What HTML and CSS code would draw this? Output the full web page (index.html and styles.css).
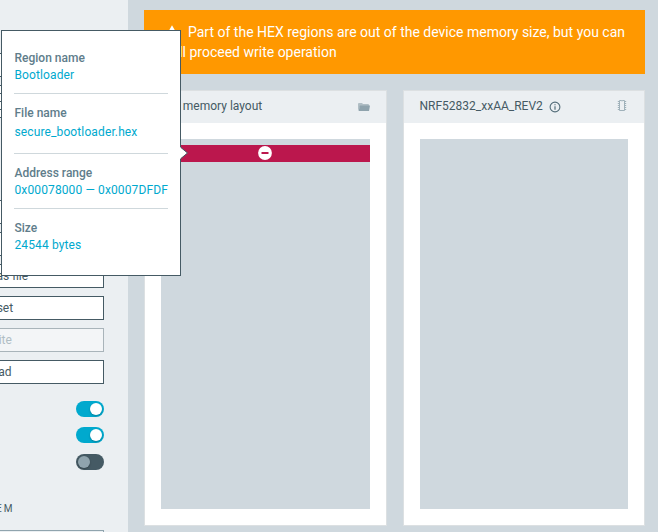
FILE: index.html
```html
<!DOCTYPE html>
<html lang="en">
<head>
<meta charset="utf-8">
<title>Programmer</title>
<link rel="stylesheet" href="styles.css">
</head>
<body>
<div class="app">
  <aside class="sidebar">
    <div class="btn"></div>
    <div class="rows"><i></i><i></i><i></i></div>
    <div class="buttons">
      <button class="btn"></button>
      <button class="btn"></button>
      <button class="btn">Save as file</button>
      <button class="btn">Reset</button>
      <button class="btn disabled">Write</button>
      <button class="btn">Read</button>
    </div>
    <div class="toggles">
      <span class="toggle on"></span>
      <span class="toggle on"></span>
      <span class="toggle last"></span>
    </div>
    <h2 class="group">EM</h2>
    <div class="field"></div>
  </aside>
  <main class="main">
    <div class="alert">
      <svg class="warn" viewBox="0 0 24 24"><path fill="#fff" fill-rule="evenodd" d="M12 2 1 21h22L12 2zm1 16h-2v-2h2v2zm0-4h-2v-4h2v4z"/></svg>Part of the HEX regions are out of the device memory size, but you can still proceed write operation
    </div>
    <div class="cards">
      <section class="card">
        <header class="head"><span>File memory layout</span>
          <svg class="folder" viewBox="0 0 12 10"><path fill="#b0bec5" d="M0 9V2q0-1 1-1h3l1 1h5q1 0 1 1v1H2.5z"/><path fill="#8fa3ad" d="M1.8 3.5H12L11 9H.7z"/></svg>
        </header>
        <div class="memory">
          <div class="region"><svg class="minus" viewBox="0 0 14 14"><circle cx="7" cy="7" r="6.9" fill="#fff"/><path d="M3.5 7h7" stroke="#bb174d" stroke-width="2"/></svg></div>
        </div>
      </section>
      <section class="card">
        <header class="head"><span>NRF52832_xxAA_REV2</span>
          <svg class="info" viewBox="0 0 12 12"><circle cx="6" cy="6" r="4.9" fill="none" stroke="#546e7a" stroke-width="1.1"/><path d="M6 5.2v3.5M6 3.2v1.1" stroke="#546e7a" stroke-width="1.2"/></svg>
          <svg class="chip" viewBox="0 0 10 13"><path d="M2.5 1.5H4q1 .8 2 0h1.5v10h-5z" fill="none" stroke="#9fb1ba"/><path d="M.8 2.5h1.7M.8 4.5h1.7M.8 6.5h1.7M.8 8.5h1.7M.8 10.5h1.7M7.5 2.5h1.7M7.5 4.5h1.7M7.5 6.5h1.7M7.5 8.5h1.7M7.5 10.5h1.7" stroke="#9fb1ba"/></svg>
        </header>
        <div class="memory"></div>
      </section>
    </div>
  </main>
  <div class="popover">
    <dl class="item"><dt>Region name</dt><dd>Bootloader</dd></dl>
    <dl class="item file"><dt>File name</dt><dd>secure_bootloader.hex</dd></dl>
    <dl class="item"><dt>Address range</dt><dd>0x00078000 — 0x0007DFDF</dd></dl>
    <dl class="item"><dt>Size</dt><dd>24544 bytes</dd></dl>
    <svg class="arrow" viewBox="0 0 8 14"><path d="M0 1 7.5 7 0 13z" fill="#fff"/><path d="M1 1.5 7.5 7 1 12.5" fill="none" stroke="#455a64"/></svg>
  </div>
</div>
</body>
</html>
```
FILE: styles.css
```css
* { box-sizing: border-box; }
body { margin: 0; font: 12px/16px Roboto, sans-serif; color: #455a64; }
.app { position: relative; display: flex; width: 658px; height: 532px; overflow: hidden; background: #cfd8de; }
.sidebar { flex: none; width: 240px; margin-left: -112px; padding: 53px 24px 0 0; background: #ebeff2; overflow: hidden; }
.rows { display: flex; flex-direction: column; gap: 7px; height: 33px; margin: 8px 0 82px; padding-top: 7px; border: 1px solid #455a64; background: #fff; }
.rows i { flex: none; height: 1px; background: #455a64; }
.buttons { display: flex; flex-direction: column; gap: 8px; }
.btn { display: block; width: 100%; height: 24px; padding: 0 0 0 4px; border: 1px solid #455a64; background: #fff; color: #455a64; font: 12px/22px Roboto, sans-serif; text-align: center; }
.btn.disabled { border-color: #a9b4ba; background: #f3f5f7; color: #b0bec5; }
.toggles { display: flex; flex-direction: column; align-items: flex-end; gap: 10px; margin-top: 17px; }
.toggle { display: flex; align-items: center; width: 28px; height: 16px; padding: 2px; border-radius: 8px; background: #455a64; }
.toggle.last { margin-top: 1px; }
.toggle::before { content: ""; width: 12px; height: 12px; border-radius: 50%; background: #90a4ae; box-shadow: 0 1px 2px rgba(0,0,0,.25); }
.toggle.on { justify-content: flex-end; background: #00a9ce; }
.toggle.on::before { background: #fff; }
.group { margin: 31px 0 13px 108px; font-size: 10px; line-height: 16px; font-weight: 400; letter-spacing: 2px; }
.field { height: 24px; border: 1px solid #90a4ae; }
.main { flex: 1; padding: 10px 13px 0 16px; }
.alert { height: 64px; padding: 12px 16px 12px 20px; background: #ff9800; color: #fff; font-size: 14px; line-height: 20px; }
.warn { width: 16px; height: 16px; margin-right: 8px; vertical-align: -3px; }
.cards { display: flex; gap: 16px; margin-top: 16px; }
.card { flex: 1; height: 436px; border: 1px solid #dce0e2; background: #fff; }
.head { display: flex; align-items: center; height: 32px; padding: 0 16px; background: #ebeff2; }
.head span { margin-bottom: 2px; }
.folder { width: 12px; height: 10px; margin: 0 0 1px auto; }
.info { width: 12px; height: 12px; margin-left: 6px; }
.chip { width: 10px; height: 13px; margin: 0 1px 3px auto; }
.memory { height: 370px; margin: 16px 16px 0; padding-top: 6px; background: #cfd8de; }
.region { display: flex; align-items: center; justify-content: center; height: 17px; background: #bb174d; }
.minus { width: 14px; height: 14px; margin-bottom: 1px; }
.popover { position: absolute; left: 1px; top: 30px; width: 180px; height: 246px; padding: 19px 12px 0; border: 1px solid #455a64; background: #fff; }
.item { margin: 0 0 11px; padding: 0 0 9px .5px; border-bottom: 1px solid #cfd8dc; }
.item:last-of-type { border: 0; }
.item dt { line-height: 17px; font-weight: 500; color: #607d8b; }
.item dd { margin: 0; line-height: 17px; letter-spacing: .12px; color: #00a9ce; white-space: nowrap; }
.item.file { padding-bottom: 12px; }
.file dd { margin-top: 2px; }
.arrow { position: absolute; left: 178px; top: 115px; width: 8px; height: 14px; }
```
